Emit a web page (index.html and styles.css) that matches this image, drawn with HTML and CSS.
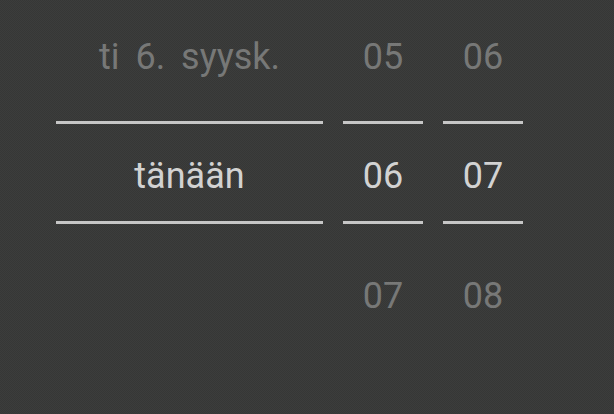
FILE: index.html
```html
<!DOCTYPE html>
<html lang="fi">
<head>
<meta charset="utf-8">
<link rel="stylesheet" href="styles.css">
</head>
<body>
<div class="picker">
  <div class="col col-date">
    <div class="cell cell-prev">ti 6. syysk.</div>
    <div class="divider"></div>
    <div class="cell cell-cur">tänään</div>
    <div class="divider"></div>
    <div class="cell cell-next"></div>
  </div>
  <div class="col col-num">
    <div class="cell cell-prev">05</div>
    <div class="divider"></div>
    <div class="cell cell-cur">06</div>
    <div class="divider"></div>
    <div class="cell cell-next">07</div>
  </div>
  <div class="col col-num">
    <div class="cell cell-prev">06</div>
    <div class="divider"></div>
    <div class="cell cell-cur">07</div>
    <div class="divider"></div>
    <div class="cell cell-next">08</div>
  </div>
</div>
</body>
</html>
```

FILE: styles.css
```css
html, body {
  margin: 0;
  padding: 0;
}
body {
  width: 614px;
  height: 414px;
  overflow: hidden;
  background-color: #393a39;
  background-image: repeating-conic-gradient(#3c3d3c 0 25%, #363736 0 50%);
  background-size: 2px 2px;
  font-family: Roboto, "Noto Sans", sans-serif;
}
.picker {
  display: flex;
  gap: 20px;
  padding-left: 56px;
}
.col {
  display: flex;
  flex-direction: column;
}
.col-date { width: 267px; }
.col-num { width: 80px; }
.cell {
  display: flex;
  align-items: center;
  justify-content: center;
  font-size: 36px;
  line-height: 1;
  color: #777877;
  box-sizing: border-box;
}
.col-date .cell-prev { word-spacing: 7px; }
.cell-prev {
  height: 121px;
  padding-bottom: 8px;
}
.cell-cur {
  height: 97px;
  padding-top: 7px;
  color: #d2d2d2;
}
.cell-next {
  height: 120px;
  padding-top: 24px;
}
.divider {
  height: 3px;
  background: #c6c6c6;
}
```
